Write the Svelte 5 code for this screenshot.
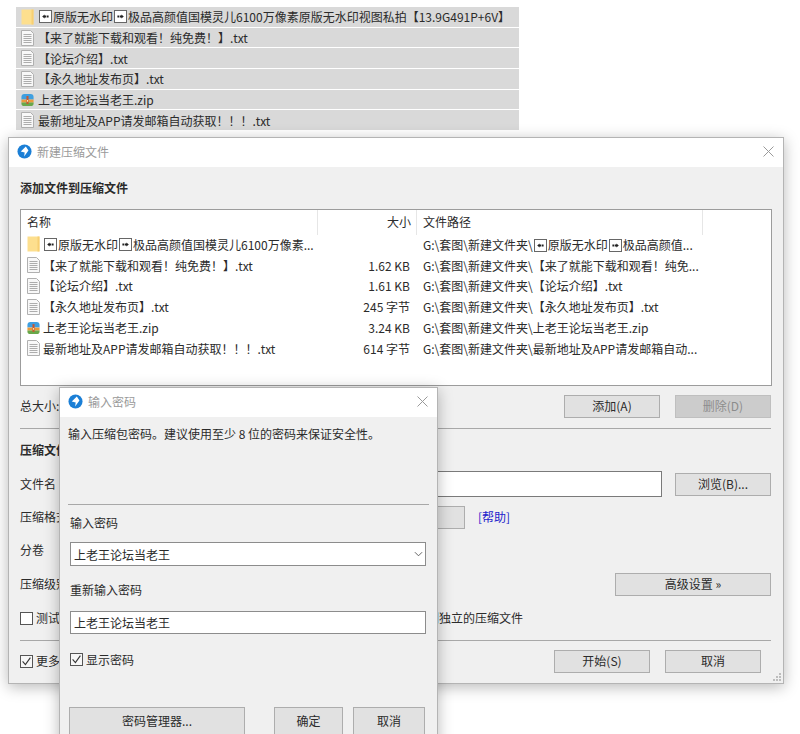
<script>
  const topFiles = [
    { icon: 'folder', name: 'folder' },
    { icon: 'txt', name: '【来了就能下载和观看！纯免费！】.txt' },
    { icon: 'txt', name: '【论坛介绍】.txt' },
    { icon: 'txt', name: '【永久地址发布页】.txt' },
    { icon: 'zip', name: '上老王论坛当老王.zip' },
    { icon: 'txt', name: '最新地址及APP请发邮箱自动获取！！！.txt' }
  ];

  const rows = [
    { icon: 'txt', name: '【来了就能下载和观看！纯免费！】.txt', size: '1.62 KB', path: 'G:\\套图\\新建文件夹\\【来了就能下载和观看！纯免...' },
    { icon: 'txt', name: '【论坛介绍】.txt', size: '1.61 KB', path: 'G:\\套图\\新建文件夹\\【论坛介绍】.txt' },
    { icon: 'txt', name: '【永久地址发布页】.txt', size: '245 字节', path: 'G:\\套图\\新建文件夹\\【永久地址发布页】.txt' },
    { icon: 'zip', name: '上老王论坛当老王.zip', size: '3.24 KB', path: 'G:\\套图\\新建文件夹\\上老王论坛当老王.zip' },
    { icon: 'txt', name: '最新地址及APP请发邮箱自动获取！！！.txt', size: '614 字节', path: 'G:\\套图\\新建文件夹\\最新地址及APP请发邮箱自动...' }
  ];
</script>

{#snippet fileIcon(kind)}
  {#if kind === 'folder'}
    <svg class="ficon" viewBox="0 0 13 16">
      <path d="M0.5 0.5h12v15h-12z" fill="#fddf8e" />
      <path d="M10.5 0.5h2v15h-2z" fill="#f7cf72" />
    </svg>
  {:else if kind === 'zip'}
    <svg class="ficon" viewBox="0 0 15 15">
      <path d="M0.5 4 Q0.5 0.5 4 0.5h7 Q14.5 0.5 14.5 4v3h-14z" fill="#3f9fe0" />
      <path d="M0.5 7h14v3.5h-14z" fill="#ea9a3c" />
      <path d="M0.5 10.5h14v1 Q14.5 14.5 11 14.5h-7 Q0.5 14.5 0.5 11.5z" fill="#69a84a" />
      <path d="M6.3 3h2.4v9h-2.4z" fill="#c8582f" />
      <path d="M6.8 7.5h1.4v2h-1.4z" fill="#f7e2b5" />
    </svg>
  {:else}
    <svg class="ficon" viewBox="0 0 13 16">
      <path d="M0.5 0.5h9l3 3v12h-12z" fill="#f8f8f8" stroke="#b0b0b0" />
      <path d="M2.5 4.5h8M2.5 6.5h8M2.5 8.5h8M2.5 10.5h8M2.5 12.5h8" stroke="#adadad" />
    </svg>
  {/if}
{/snippet}

{#snippet arrowBox(dir)}
  <svg class="abox" viewBox="0 0 13 13">
    <rect x="0.5" y="0.5" width="12" height="12" fill="#fff" stroke="#666" />
    {#if dir === 'l'}
      <path d="M3.2 6.5l2.4-2v4z M5.6 5.6h1.6v1.8h-1.6z M7.8 5.6h1.8v1.8h-1.8z" fill="#222" />
    {:else}
      <path d="M9.8 6.5l-2.4-2v4z M5.8 5.6h1.6v1.8h-1.6z M3.4 5.6h1.8v1.8h-1.8z" fill="#222" />
    {/if}
  </svg>
{/snippet}

{#snippet appIcon()}
  <svg class="app-icon" viewBox="0 0 16 16">
    <circle cx="8" cy="8" r="7.5" fill="#1b7fd6" />
    <path d="M9.4 2.6 L12.2 7 L7.6 13.4 L8.2 9 L4 8z" fill="#fff" />
  </svg>
{/snippet}

{#snippet closeX()}
  <svg class="close-x" viewBox="0 0 11 11">
    <path d="M0.5 0.5l10 10M10.5 0.5l-10 10" stroke="#9a9a9a" fill="none" />
  </svg>
{/snippet}

{#snippet check(on)}
  <svg class="check" viewBox="0 0 13 13">
    <rect x="0.5" y="0.5" width="12" height="12" fill={on ? '#f7f7f7' : '#fff'} stroke="#555" />
    {#if on}<path d="M2.6 6.4l2.8 3.2 5-7" fill="none" stroke="#333" stroke-width="1.1" />{/if}
  </svg>
{/snippet}

<div class="screen">
  <ul class="top-list">
    {#each topFiles as f}
      <li>
        {@render fileIcon(f.icon)}
        {#if f.name === 'folder'}
          <span class="top-name">{@render arrowBox('l')}原版无水印{@render arrowBox('r')}极品高颜值国模灵儿6100万像素原版无水印视图私拍【13.9G491P+6V】</span>
        {:else}
          <span class="top-name">{f.name}</span>
        {/if}
      </li>
    {/each}
  </ul>

  <section class="win main-win">
    <header class="titlebar">
      {@render appIcon()}
      <span class="title">新建压缩文件</span>
      {@render closeX()}
    </header>
    <div class="main-body">
      <h4 class="first">添加文件到压缩文件</h4>

      <div class="listbox">
        <div class="grid head">
          <span class="col-name">名称</span>
          <span class="col-size">大小</span>
          <span class="col-path">文件路径</span>
        </div>
        <div class="grid row">
          <span class="col-name">{@render fileIcon('folder')}<span class="nm">{@render arrowBox('l')}原版无水印{@render arrowBox('r')}极品高颜值国模灵儿6100万像素...</span></span>
          <span class="col-size"></span>
          <span class="col-path">G:\套图\新建文件夹\{@render arrowBox('l')}原版无水印{@render arrowBox('r')}极品高颜值...</span>
        </div>
        {#each rows as r}
          <div class="grid row">
            <span class="col-name">{@render fileIcon(r.icon)}<span class="nm">{r.name}</span></span>
            <span class="col-size">{r.size}</span>
            <span class="col-path">{r.path}</span>
          </div>
        {/each}
      </div>

      <div class="total-row">
        <span class="lbl push">总大小:</span>
        <button class="btn">添加(A)</button>
        <button class="btn off">删除(D)</button>
      </div>

      <hr class="rule-a" />
      <h4 class="second">压缩文件</h4>

      <div class="form-row file-row">
        <span class="lbl">文件名</span>
        <div class="field"></div>
        <button class="btn">浏览(B)...</button>
      </div>
      <div class="form-row fmt-row">
        <span class="lbl">压缩格式</span>
        <div class="fmt-combo"></div>
        <span class="help">[帮助]</span>
      </div>
      <div class="form-row vol-row">
        <span class="lbl">分卷</span>
      </div>
      <div class="form-row level-row">
        <span class="lbl push">压缩级别</span>
        <button class="btn wide">高级设置 »</button>
      </div>
      <div class="form-row test-row">
        {@render check(false)}
        <span class="test-a">测试压缩文件</span>
        <span class="test-b">把每个文件压缩到独立的压缩文件</span>
      </div>

      <hr class="rule-b" />

      <div class="bottom-row">
        {@render check(true)}
        <span class="more">更多选项</span>
        <button class="btn">开始(S)</button>
        <button class="btn">取消</button>
      </div>
    </div>
    <svg class="grip" viewBox="0 0 10 10">
      <path d="M7 1h2v2H7zM4 4h2v2H4zM7 4h2v2H7zM1 7h2v2H1zM4 7h2v2H4zM7 7h2v2H7z" fill="#bdbdbd" />
    </svg>
  </section>

  <section class="win pwd-win">
    <header class="titlebar">
      {@render appIcon()}
      <span class="title">输入密码</span>
      {@render closeX()}
    </header>
    <div class="pwd-body">
      <p class="hint">输入压缩包密码。建议使用至少 8 位的密码来保证安全性。</p>
      <hr class="pwd-rule" />
      <label class="pwd-lbl first-lbl" for="pw1">输入密码</label>
      <div class="pwd-combo">
        <input id="pw1" value="上老王论坛当老王" />
        <svg class="chev" viewBox="0 0 10 6"><path d="M1 1l4 4 4-4" fill="none" stroke="#555" /></svg>
      </div>
      <label class="pwd-lbl second-lbl" for="pw2">重新输入密码</label>
      <input id="pw2" class="pwd-input" value="上老王论坛当老王" />
      <div class="show-row">
        {@render check(true)}
        <span>显示密码</span>
      </div>
      <div class="pwd-btns">
        <button class="btn mgr">密码管理器...</button>
        <button class="btn ok">确定</button>
        <button class="btn cancel">取消</button>
      </div>
    </div>
  </section>
</div>

<style>
  :global(body) {
    margin: 0;
    background: #fff;
  }

  .screen {
    position: relative;
    width: 800px;
    height: 734px;
    overflow: hidden;
    background: #fff;
    font-family: "Noto Sans CJK SC", "Liberation Sans", sans-serif;
    font-size: 12px;
    color: #2b2b2b;
  }

  .top-list {
    list-style: none;
    margin: 0;
    padding: 7px 0 0 16px;
    width: 503px;
    display: flex;
    flex-direction: column;
    gap: 1px;
  }

  .top-list li {
    height: 19.7px;
    background: #d9d9d9;
    display: flex;
    align-items: center;
    padding-left: 5px;
  }

  .top-name {
    margin-left: 4px;
    white-space: nowrap;
    display: flex;
    align-items: center;
  }

  .ficon {
    width: 13px;
    height: 16px;
    flex: none;
  }

  .abox {
    width: 13px;
    height: 13px;
    margin: 0 1px;
    flex: none;
    vertical-align: -2px;
  }

  .win {
    position: absolute;
    box-sizing: border-box;
    background: #f0f0f0;
    border: 1px solid #b4b4b4;
    box-shadow: 0 3px 14px rgba(0, 0, 0, 0.28);
  }

  .main-win {
    left: 8px;
    top: 137px;
    width: 776px;
    height: 547px;
  }

  .pwd-win {
    left: 59px;
    top: 387px;
    width: 379px;
    height: 360px;
  }

  .titlebar {
    box-sizing: border-box;
    height: 29px;
    background: #fff;
    display: flex;
    align-items: center;
    padding: 0 9px 2px 8px;
  }

  .app-icon {
    width: 15px;
    height: 15px;
    flex: none;
  }

  .title {
    flex: 1;
    margin-left: 5px;
    color: #9a9a9a;
  }

  .close-x {
    width: 11px;
    height: 11px;
    flex: none;
  }

  .main-body {
    padding: 0 12px 0 11px;
  }

  h4 {
    margin: 0;
    height: 18px;
    line-height: 18px;
    font-size: 12px;
    font-weight: 700;
  }

  h4.first {
    padding-top: 12px;
  }

  h4.second {
    margin-top: 12px;
  }

  .listbox {
    box-sizing: border-box;
    margin: 12px -1px 0 0;
    height: 177px;
    background: #fff;
    border: 1px solid #9c9c9c;
  }

  .grid {
    display: grid;
    grid-template-columns: 297px 99px 286px;
    align-items: center;
  }

  .head {
    height: 25px;
  }

  .head span {
    border-right: 1px solid #e6e6e6;
    height: 24px;
    line-height: 24px;
    padding-bottom: 1px;
  }

  .head .col-size {
    padding-right: 5px;
  }

  .row {
    box-sizing: border-box;
    height: 20.8px;
    padding-bottom: 2px;
    white-space: nowrap;
  }

  .col-name {
    padding-left: 6px;
    display: flex;
    align-items: center;
    overflow: hidden;
  }

  .nm {
    margin-left: 3px;
    display: flex;
    align-items: center;
  }

  .col-size {
    text-align: right;
    padding-right: 7px;
  }

  .col-path {
    padding-left: 6px;
  }

  .total-row {
    display: flex;
    align-items: center;
    margin-top: 9px;
    gap: 15px;
    height: 23px;
  }

  .push {
    margin-right: auto;
  }

  .btn {
    box-sizing: border-box;
    width: 96px;
    height: 23px;
    padding: 0 0 2px;
    background: #e1e1e1;
    border: 1px solid #adadad;
    border-radius: 0;
    font: inherit;
    color: #2b2b2b;
    flex: none;
  }

  .btn.off {
    background: #cccccc;
    border-color: #bfbfbf;
    color: #8c8c8c;
  }

  .btn.wide {
    width: 156px;
  }

  hr {
    border: 0;
    height: 1px;
    margin: 0;
    background: #a8a8a8;
  }

  .rule-a {
    margin-top: 10px;
  }

  .rule-b {
    margin-top: 11px;
  }

  .form-row {
    display: flex;
    align-items: center;
    height: 23px;
  }

  .lbl {
    box-sizing: border-box;
    width: 62px;
    flex: none;
    padding-bottom: 2px;
  }

  .file-row {
    margin-top: 12px;
    height: 26px;
  }

  .field {
    box-sizing: border-box;
    flex: 1;
    margin-right: 13px;
    height: 26px;
    background: #fff;
    border: 1px solid #7a7a7a;
  }

  .fmt-row {
    margin-top: 9px;
  }

  .fmt-combo {
    box-sizing: border-box;
    width: 383px;
    height: 23px;
    background: #e1e1e1;
    border: 1px solid #adadad;
  }

  .help {
    margin-left: 13px;
    padding-bottom: 2px;
    color: #2222cc;
  }

  .vol-row {
    margin-top: 10px;
  }

  .level-row {
    margin-top: 11px;
  }

  .test-row {
    margin-top: 11px;
    height: 22px;
  }

  .test-a {
    margin-left: 3px;
    width: 150px;
    padding-bottom: 2px;
  }

  .test-b {
    margin-left: 157px;
    padding-bottom: 2px;
  }

  .check {
    width: 13px;
    height: 13px;
    flex: none;
  }

  .bottom-row {
    display: flex;
    align-items: center;
    margin-top: 9px;
    height: 23px;
    gap: 15px;
    padding-right: 10px;
  }

  .more {
    margin: 0 auto 0 -12px;
    padding-bottom: 2px;
  }

  .grip {
    position: absolute;
    right: 1px;
    bottom: 1px;
    width: 10px;
    height: 10px;
  }

  .pwd-body {
    padding: 0 8px;
  }

  .hint {
    margin: 8px 0 0;
    line-height: 18px;
    height: 18px;
  }

  .pwd-rule {
    margin-top: 61px;
  }

  .pwd-lbl {
    display: block;
    height: 18px;
    line-height: 18px;
    padding-left: 2px;
  }

  .first-lbl {
    margin-top: 9px;
  }

  .second-lbl {
    margin-top: 15px;
  }

  .pwd-combo {
    position: relative;
    margin: 10px 3px 0 2px;
    height: 24px;
  }

  .pwd-combo input,
  .pwd-input {
    box-sizing: border-box;
    display: block;
    width: 100%;
    height: 24px;
    padding: 0 3px;
    background: #fff;
    border: 1px solid #8c8c8c;
    border-radius: 0;
    font: inherit;
    color: #2b2b2b;
    outline: none;
  }

  .pwd-input {
    width: 356px;
    height: 23px;
    margin: 12px 0 0 2px;
  }

  .chev {
    position: absolute;
    right: 3px;
    top: 9px;
    width: 9px;
    height: 6px;
  }

  .show-row {
    display: flex;
    align-items: center;
    gap: 3px;
    height: 18px;
    margin: 16px 0 0 2px;
  }

  .pwd-btns {
    display: flex;
    margin: 39px 0 0 1px;
  }

  .pwd-btns .btn {
    height: 29px;
    padding-bottom: 3px;
  }

  .pwd-btns .mgr {
    width: 176px;
  }

  .pwd-btns .ok {
    width: 69px;
    margin-left: 29px;
  }

  .pwd-btns .cancel {
    width: 72px;
    margin-left: 10px;
  }
</style>
